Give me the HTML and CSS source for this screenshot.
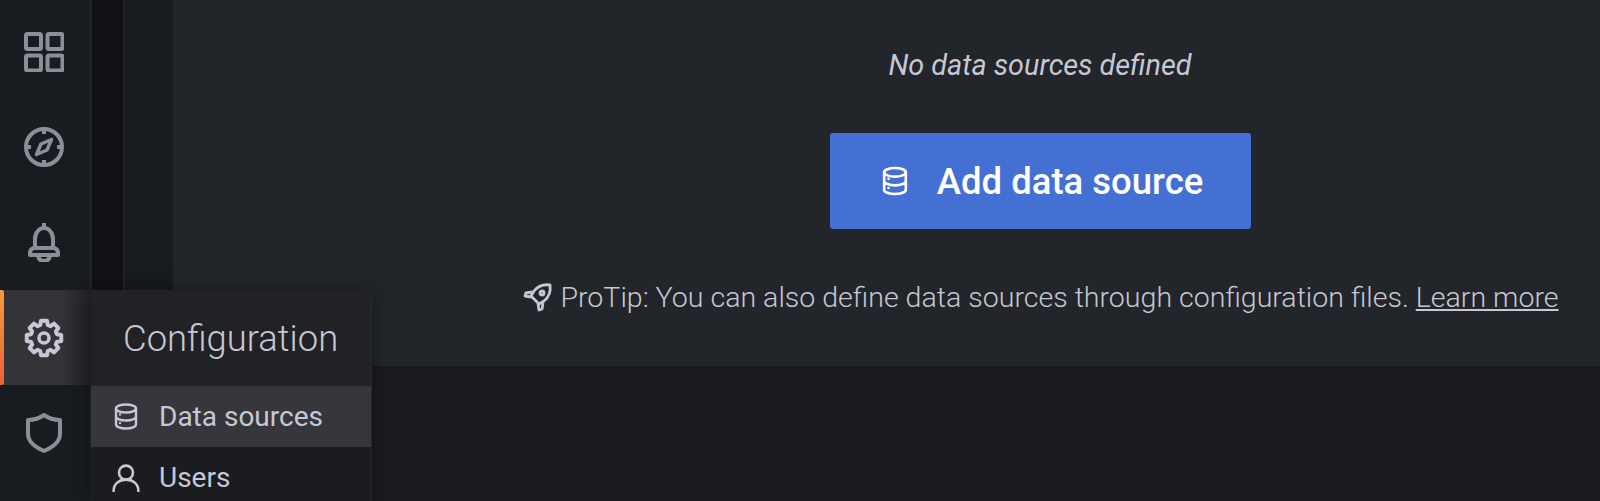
FILE: index.html
```html
<!DOCTYPE html>
<html lang="en">
<head>
    <meta charset="UTF-8">
    <meta name="viewport" content="width=device-width, initial-scale=1.0">
    <title>Data sources</title>
    <link rel="stylesheet" href="styles.css">
</head>
<body>
    <div class="app">
        <nav class="sidemenu">
            <div class="side-item">
                <svg class="side-icon" viewBox="0 0 40 40"><rect x="2" y="2" width="15" height="15" rx="1.500"/><rect x="23.500" y="2" width="15" height="15" rx="1.500"/><rect x="2" y="23.500" width="15" height="15" rx="1.500"/><rect x="23.500" y="23.500" width="15" height="15" rx="1.500"/></svg>
            </div>
            <div class="side-item">
                <svg class="side-icon" viewBox="0 0 40 40"><circle cx="20" cy="20" r="18"/><path d="M20 3v4M20 33v4M3 20h4M33 20h4"/><path class="thin" d="M27.500 12.500 L23 23 L12.500 27.500 L17 17 Z"/></svg>
            </div>
            <div class="side-item">
                <svg class="side-icon" viewBox="0 0 40 40"><path d="M20 1v4M11 26v-9a9 11 0 0 1 18 0v9M6 33v-2q0-4 4-5h20q4 1 4 5v2ZM14 34q1 5 6 5t6-5"/></svg>
            </div>
            <div class="side-item active">
                <svg class="side-icon" viewBox="0 0 40 40"><path d="M23.040 2.770 23.720 7.020 26.540 8.190 30.040 5.660 34.340 9.960 31.810 13.460 32.980 16.280 37.230 16.960 37.230 23.040 32.980 23.720 31.810 26.540 34.340 30.040 30.040 34.340 26.540 31.810 23.720 32.980 23.040 37.230 16.960 37.230 16.280 32.980 13.460 31.810 9.960 34.340 5.660 30.040 8.190 26.540 7.020 23.720 2.770 23.040 2.770 16.960 7.020 16.280 8.190 13.460 5.660 9.960 9.960 5.660 13.460 8.190 16.280 7.020 16.960 2.770Z"/><circle class="thin" cx="20" cy="20" r="5"/></svg>
            </div>
            <div class="side-item">
                <svg class="side-icon" viewBox="0 0 40 40"><path d="M20 2 Q27 7 36 7 V21 Q36 31 20 38 Q4 31 4 21 V7 Q13 7 20 2Z"/></svg>
            </div>
        </nav>
        <div class="gutter-dark"></div>
        <div class="gutter"></div>
        <main class="content">
            <section class="panel">
                <p class="empty-title">No data sources defined</p>
                <a class="add-btn">
                    <svg class="db-icon" viewBox="0 0 24 26"><ellipse cx="12" cy="5" rx="10" ry="4"/><path d="M2 5v16c0 2.200 4.500 4 10 4s10-1.800 10-4V5M2 13c0 2.200 4.500 4 10 4s10-1.800 10-4"/><path d="M6 11h.01M6 19.500h.01"/></svg>
                    Add data source
                </a>
                <p class="protip">
                    <svg class="rocket" viewBox="0 0 30 30"><path d="M27 3c-7-1-12 1-16 6l-3 5 8 8 5-3c5-4 7-9 6-16Z"/><path d="M9 10 3 11l-1 3 6 1M20 21l-1 6-3 1-1-6"/><circle cx="19" cy="11" r="2"/></svg>
                    ProTip: You can also define data sources through configuration files. <u>Learn more</u>
                </p>
            </section>
            <div class="page-bottom"></div>
        </main>
    </div>

    <div class="flyout">
        <div class="flyout-header">Configuration</div>
        <div class="flyout-item selected">
            <svg class="flyout-icon" viewBox="0 0 24 26"><ellipse cx="12" cy="5" rx="10" ry="4"/><path d="M2 5v16c0 2.200 4.500 4 10 4s10-1.800 10-4V5M2 13c0 2.200 4.500 4 10 4s10-1.800 10-4"/><path d="M6 11h.01M6 19.500h.01"/></svg>
            Data sources
        </div>
        <div class="flyout-item">
            <svg class="flyout-icon user" viewBox="0 0 26 26"><circle cx="13" cy="8" r="6.500"/><path d="M1.500 25c0-6.500 5-10.500 11.500-10.500S24.500 18.500 24.500 25"/></svg>
            Users
        </div>
    </div>
</body>
</html>
```

FILE: styles.css
```css
html, body {
    margin: 0;
    height: 100%;
    overflow: hidden;
}

body {
    font-family: Roboto, 'Liberation Sans', sans-serif;
    background-color: #181b1f;
    color: #c7c7d5;
}

.app {
    display: flex;
    height: 501px;
}

.sidemenu {
    width: 89px;
    padding-top: 4px;
    border-right: 3px solid #202226;
    background-color: #181b1f;
    flex-shrink: 0;
}

.side-item {
    height: 95.33px;
    padding-right: 1px;
    box-sizing: border-box;
    display: flex;
    align-items: center;
    justify-content: center;
}

.side-item.active {
    position: relative;
    margin-right: -3px;
    padding-right: 4px;
    background: linear-gradient(90deg, #333438 65%, #202226 100%);
}

.side-item.active::before {
    content: "";
    position: absolute;
    left: 0;
    top: 0;
    bottom: 0;
    width: 4px;
    border-radius: 0 2px 2px 0;
    background: linear-gradient(180deg, #f79a3c, #e8623c);
}

.side-icon {
    width: 40px;
    height: 40px;
    fill: none;
    stroke: #8e8e99;
    stroke-width: 4;
    stroke-linejoin: round;
}

.side-icon .thin {
    stroke-width: 3.500;
}

.side-item.active .side-icon {
    stroke: #c7c7d5;
}

.gutter-dark {
    width: 31px;
    border-right: 2px solid #202226;
    background-color: #111216;
    flex-shrink: 0;
}

.gutter {
    width: 48px;
    flex-shrink: 0;
}

.content {
    flex: 1;
    display: flex;
    flex-direction: column;
}

.panel {
    height: 366px;
    padding-left: 307px;
    background-color: #22252a;
    display: flex;
    flex-direction: column;
    align-items: center;
}

.empty-title {
    margin: 47px 0 0;
    font-size: 28.8px;
    line-height: 36px;
    font-style: italic;
}

.add-btn {
    margin-top: 50px;
    width: 421px;
    height: 96px;
    box-sizing: border-box;
    padding-left: 5px;
    display: flex;
    align-items: center;
    justify-content: center;
    gap: 29px;
    border-radius: 3px;
    background-color: #4570d3;
    color: #fff;
    font-size: 36.5px;
    font-weight: 500;
}

.db-icon {
    width: 26px;
    height: 30px;
    fill: none;
    stroke: #fff;
    stroke-width: 2.400;
    stroke-linecap: round;
}

.protip {
    margin: 51px 0 0;
    padding-left: 2px;
    font-size: 28.55px;
    line-height: 36px;
    font-weight: 300;
    white-space: nowrap;
}

.rocket {
    width: 30px;
    height: 30px;
    vertical-align: -5px;
    fill: none;
    stroke: #c7c7d5;
    stroke-width: 2.800;
    stroke-linejoin: round;
}

.page-bottom {
    flex: 1;
    background-color: #191b1f;
}

.flyout {
    position: absolute;
    left: 91px;
    top: 290px;
    width: 280px;
    background-color: #1a1c20;
    border-right: 1px solid #26282c;
    box-shadow: 0 0 20px rgba(0, 0, 0, 0.35);
}

.flyout-header {
    height: 96px;
    box-sizing: border-box;
    padding-left: 32px;
    display: flex;
    align-items: center;
    background-color: #202226;
    font-size: 36.4px;
    font-weight: 300;
}

.flyout-item {
    height: 61px;
    padding-left: 23px;
    display: flex;
    align-items: center;
    gap: 21px;
    font-size: 28px;
}

.flyout-item.selected {
    background-color: #35373c;
}

.flyout-icon {
    width: 24px;
    height: 27px;
    fill: none;
    stroke: #c7c7d5;
    stroke-width: 2.400;
    stroke-linecap: round;
}

.flyout-icon.user {
    width: 28px;
    height: 28px;
    margin: 0 -2px;
}
```
